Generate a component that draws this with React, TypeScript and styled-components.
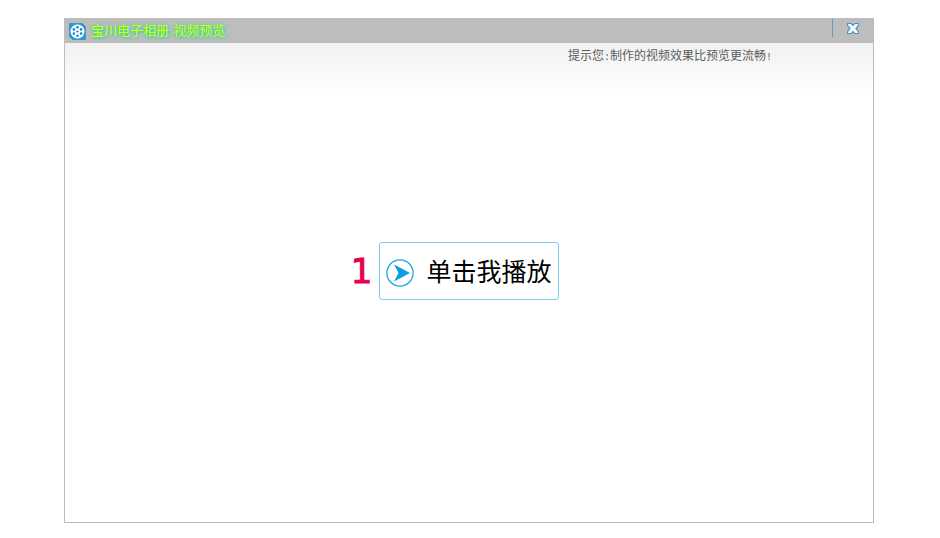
import React from "react";
import styled, { createGlobalStyle } from "styled-components";

const GlobalStyle = createGlobalStyle`
  *, *::before, *::after { box-sizing: border-box; }
  body { margin: 0; background: #fff; }
  button { font: inherit; background: none; border: 0; padding: 0; cursor: pointer; }
`;

const Page = styled.div`
  display: flex;
  min-height: 100vh;
  padding: 18px 66px 15px 64px;
  font-family: "DejaVu Sans", "Noto Sans CJK SC", sans-serif;
`;

const PlayerWindow = styled.section`
  display: flex;
  flex-direction: column;
  flex: 1;
  border: 1px solid #bdbdbd;
  background: #fff;
`;

const TitleBar = styled.header`
  display: flex;
  align-items: center;
  height: 24px;
  padding-left: 4px;
  background: #bdbdbd;
`;

const Title = styled.h1`
  flex: 1;
  margin: 0 0 0 5px;
  font-size: 13px;
  font-weight: 400;
  line-height: 20px;
  color: #d8ff00;
  text-shadow: 1px 1px 3px #10d8a0, 0 0 4px #3fd8b0;
`;

const CloseButton = styled.button`
  display: flex;
  align-items: center;
  justify-content: center;
  align-self: flex-start;
  width: 41px;
  height: 18px;
  border-left: 1px solid #5f9cc4;
`;

const Body = styled.main`
  display: flex;
  flex-direction: column;
  flex: 1;
  background: linear-gradient(#f1f1f1, #fff 52px);
`;

const Tip = styled.p`
  margin: 0;
  padding: 3px 101px 0 0;
  text-align: right;
  font-size: 12px;
  line-height: 20px;
  color: #5c5c5c;
`;

const Mark = styled.span`
  font-family: "Liberation Mono", monospace;
  font-size: 10px;
`;

const Stage = styled.div`
  display: grid;
  grid-template-columns: 1fr auto 1fr;
  align-items: center;
  flex: 1;
  padding-bottom: 49px;
`;

const StepNumber = styled.span`
  justify-self: end;
  margin-right: 7px;
  font-size: 34px;
  line-height: 56px;
  color: #e6004f;
  -webkit-text-stroke: 1px #e6004f;
`;

const PlayButton = styled.button`
  display: flex;
  align-items: center;
  gap: 12px;
  height: 58px;
  padding: 4px 6px 0;
  border: 1px solid #7ecef4;
  border-radius: 3px;
  background: #fff;
  color: #000;
  font-size: 25px;
  line-height: 36px;
  white-space: nowrap;
`;

function FilmIcon() {
  return (
    <svg width="17" height="17" viewBox="0 0 17 17" aria-hidden="true">
      <path d="M0 0H13L17 4V17H4L0 13Z" fill="#1c9fdc" />
      <path d="M0 0H13L17 4V17H4L0 13Z" fill="none" stroke="#5f94b0" strokeWidth="1" />
      <circle cx="8.5" cy="8.5" r="7" fill="#fff" />
      <g fill="#168bc8">
        <circle cx="8.5" cy="8.5" r="1.1" />
        <circle cx="8.5" cy="4.3" r="1.3" />
        <circle cx="12.1" cy="6.4" r="1.3" />
        <circle cx="12.1" cy="10.6" r="1.3" />
        <circle cx="8.5" cy="12.7" r="1.3" />
        <circle cx="4.9" cy="10.6" r="1.3" />
        <circle cx="4.9" cy="6.4" r="1.3" />
      </g>
    </svg>
  );
}

function CloseIcon() {
  return (
    <svg width="12" height="11" viewBox="0 0 12 11" aria-hidden="true">
      <path
        d="M.5 .5H4.3L6 2.3L7.7 .5H11.5V2.5L9 5.5L11.5 8.5V10.5H7.7L6 8.7L4.3 10.5H.5V8.5L3 5.5L.5 2.5Z"
        fill="#f4f8fa"
        stroke="#4a94c4"
        strokeWidth="1.2"
      />
    </svg>
  );
}

function PlayIcon() {
  return (
    <svg width="28" height="28" viewBox="0 0 28 28" aria-hidden="true">
      <circle cx="14" cy="14" r="13.1" fill="none" stroke="#1ba5e3" strokeWidth="1.3" />
      <path d="M8 5.5L24 14L8 22.5L12.5 14Z" fill="#0a9ee2" />
    </svg>
  );
}

export default function App() {
  return (
    <>
      <GlobalStyle />
      <Page>
        <PlayerWindow>
          <TitleBar>
            <FilmIcon />
            <Title>宝川电子相册 视频预览</Title>
            <CloseButton type="button" aria-label="关闭">
              <CloseIcon />
            </CloseButton>
          </TitleBar>
          <Body>
            <Tip>
              提示您<Mark>:</Mark>制作的视频效果比预览更流畅<Mark>!</Mark>
            </Tip>
            <Stage>
              <StepNumber>1</StepNumber>
              <PlayButton type="button">
                <PlayIcon />
                单击我播放
              </PlayButton>
            </Stage>
          </Body>
        </PlayerWindow>
      </Page>
    </>
  );
}
